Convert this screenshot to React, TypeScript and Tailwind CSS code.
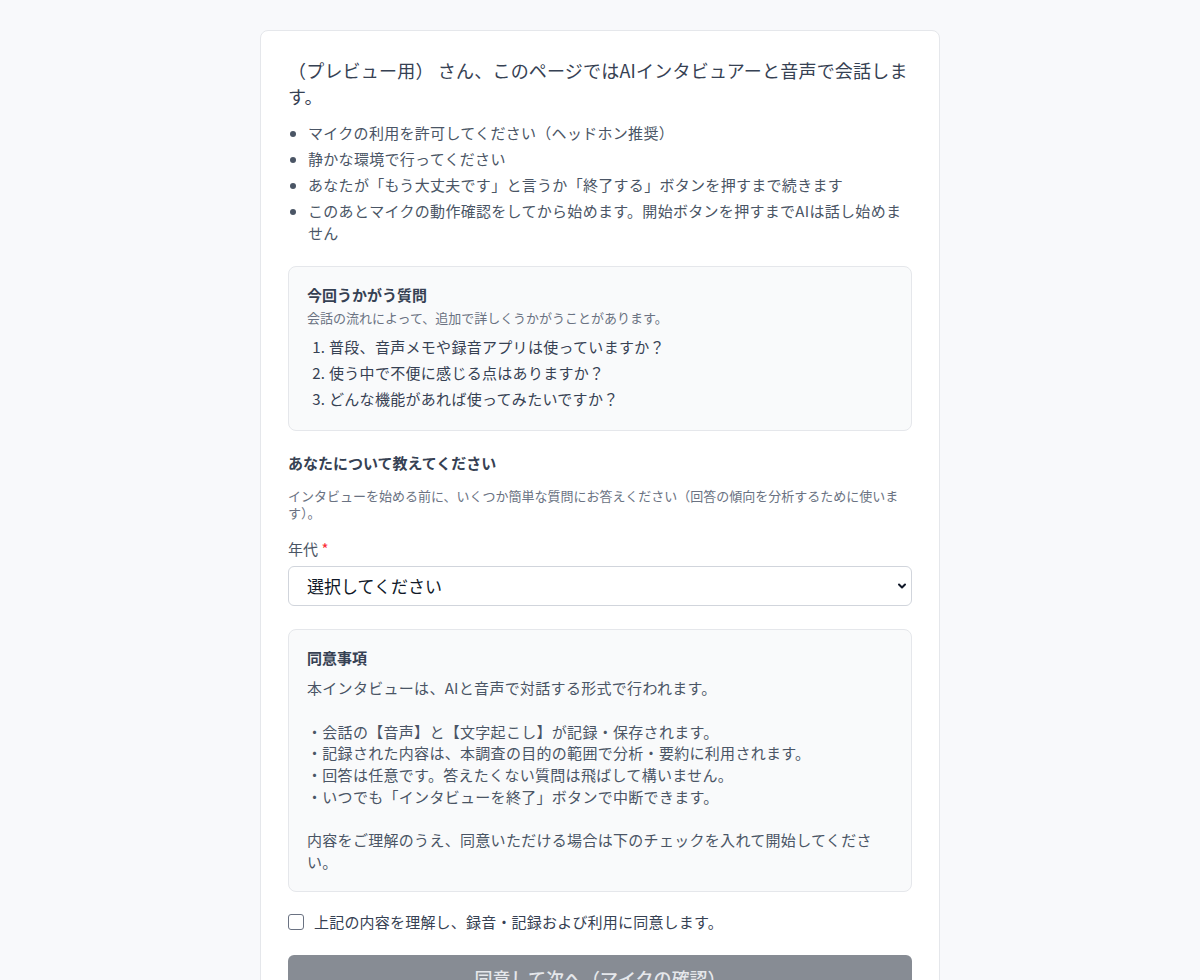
import { ChevronDown } from 'lucide-react';

const notes = [
  'マイクの利用を許可してください（ヘッドホン推奨）',
  '静かな環境で行ってください',
  'あなたが「もう大丈夫です」と言うか「終了する」ボタンを押すまで続きます',
  'このあとマイクの動作確認をしてから始めます。開始ボタンを押すまでAIは話し始めません',
];

const questions = [
  '普段、音声メモや録音アプリは使っていますか？',
  '使う中で不便に感じる点はありますか？',
  'どんな機能があれば使ってみたいですか？',
];

const consentText = `本インタビューは、AIと音声で対話する形式で行われます。

・会話の【音声】と【文字起こし】が記録・保存されます。
・記録された内容は、本調査の目的の範囲で分析・要約に利用されます。
・回答は任意です。答えたくない質問は飛ばして構いません。
・いつでも「インタビューを終了」ボタンで中断できます。

内容をご理解のうえ、同意いただける場合は下のチェックを入れて開始してください。`;

export default function App() {
  return (
    <div
      className="min-h-screen bg-[#f8f9fb] pt-[30px] pb-10"
      style={{ fontFamily: '"Noto Sans CJK JP", "Noto Sans", sans-serif' }}
    >
      <div className="mx-auto w-[680px] bg-white border border-gray-200 rounded-lg px-[27px] pt-[26px] pb-8">
        {/* Intro */}
        <p className="text-[18px] leading-[26px] text-gray-700 tracking-[0.2px]">
          （プレビュー用） さん、このページではAIインタビュアーと音声で会話します。
        </p>

        <ul className="mt-[13px] list-disc pl-5 text-[15px] leading-[22px] tracking-[0.3px] text-gray-600 space-y-1 marker:text-gray-600">
          {notes.map((n) => (
            <li key={n}>{n}</li>
          ))}
        </ul>

        {/* Questions */}
        <div className="mt-[22px] bg-gray-50 border border-gray-200 rounded-lg px-[18px] pt-[17px] pb-[18px]">
          <h3 className="text-[15px] leading-[22px] font-bold text-gray-700">今回うかがう質問</h3>
          <p className="mt-[2px] text-[13px] leading-[20px] text-gray-500">会話の流れによって、追加で詳しくうかがうことがあります。</p>
          <ol className="mt-[6px] list-decimal pl-[22px] text-[15px] leading-[26px] tracking-[0.3px] text-gray-700">
            {questions.map((q) => (
              <li key={q}>{q}</li>
            ))}
          </ol>
        </div>

        {/* About you */}
        <h3 className="mt-[21px] text-[15px] leading-[22px] font-bold text-gray-700">あなたについて教えてください</h3>
        <p className="mt-[13px] text-[13px] leading-[17px] text-gray-500">
          インタビューを始める前に、いくつか簡単な質問にお答えください（回答の傾向を分析するために使います）。
        </p>

        <label className="block mt-[17px] text-[15px] leading-[22px] text-gray-600">
          年代 <span className="text-red-500">*</span>
        </label>
        <div className="relative mt-[6px]">
          <select className="w-full h-[40px] appearance-none bg-white border border-gray-300 rounded-md pl-[18px] pr-8 text-[17px] text-gray-900">
            <option>選択してください</option>
          </select>
          <ChevronDown className="absolute right-[4px] top-[14px] w-[12px] h-[12px] text-gray-900 pointer-events-none" strokeWidth={4} />
        </div>

        {/* Consent */}
        <div className="mt-[23px] bg-gray-50 border border-gray-200 rounded-lg px-[18px] pt-[17px] pb-[18px]">
          <h3 className="text-[15px] leading-[22px] font-bold text-gray-700">同意事項</h3>
          <p className="mt-[8px] whitespace-pre-line text-[15px] leading-[21.75px] tracking-[0.3px] text-gray-600 pr-[20px]">{consentText}</p>
        </div>

        <label className="mt-[19px] flex items-center gap-[10px] text-[15px] leading-[22px] tracking-[0.2px] text-gray-700">
          <input type="checkbox" className="w-4 h-4 appearance-none border border-gray-500 rounded-[3px] bg-white" />
          上記の内容を理解し、録音・記録および利用に同意します。
        </label>

        <button className="mt-[22px] w-full h-[48px] rounded-md bg-[#878c94] text-gray-200 text-[18px] font-medium">
          同意して次へ（マイクの確認）
        </button>
      </div>
    </div>
  );
}
